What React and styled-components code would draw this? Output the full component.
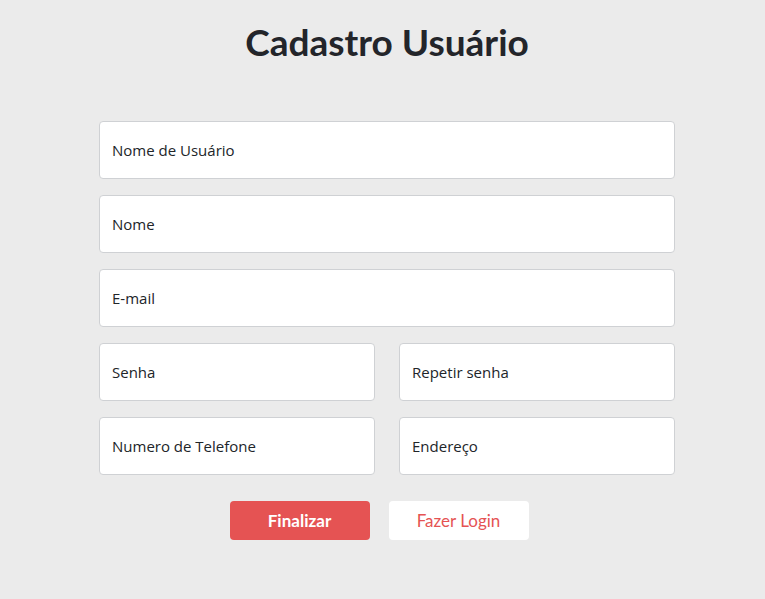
import React from "react";
import styled, { createGlobalStyle } from "styled-components";

const GlobalStyle = createGlobalStyle`
  html, body {
    margin: 0;
    padding: 0;
    background-color: #ebebeb;
    font-family: "Open Sans", "Noto Sans", sans-serif;
  }
`;

const fields = [
  [{ id: "username", placeholder: "Nome de Usuário" }],
  [{ id: "name", placeholder: "Nome" }],
  [{ id: "email", placeholder: "E-mail", type: "email" }],
  [
    { id: "password", placeholder: "Senha", type: "password" },
    { id: "repeat", placeholder: "Repetir senha", type: "password" },
  ],
  [
    { id: "phone", placeholder: "Numero de Telefone" },
    { id: "address", placeholder: "Endereço" },
  ],
];

const App = () => {
  return (
    <Container>
      <GlobalStyle />
      <Title>Cadastro Usuário</Title>
      <Form onSubmit={(e) => e.preventDefault()}>
        {fields.map((row, i) => (
          <Row key={i} $cols={row.length}>
            {row.map((f) => (
              <Input
                key={f.id}
                type={f.type || "text"}
                placeholder={f.placeholder}
              />
            ))}
          </Row>
        ))}
        <Buttons>
          <Button type="submit" $primary>
            Finalizar
          </Button>
          <Button type="button">Fazer Login</Button>
        </Buttons>
      </Form>
    </Container>
  );
};

export default App;

const Container = styled.div`
  box-sizing: border-box;
  width: 100%;
  min-height: 599px;
  padding-left: 9px;
  display: flex;
  flex-direction: column;
  align-items: center;
`;

const Title = styled.h1`
  margin: 16px 0 0;
  font-family: Lato, "Liberation Sans", sans-serif;
  font-size: 37px;
  font-weight: 700;
  line-height: 52px;
  color: #23252a;
`;

const Form = styled.form`
  width: 576px;
  margin-top: 53px;
  display: flex;
  flex-direction: column;
  gap: 16px;
`;

const Row = styled.div`
  display: grid;
  grid-template-columns: repeat(${(p) => p.$cols}, 1fr);
  column-gap: 24px;
`;

const Input = styled.input`
  box-sizing: border-box;
  height: 58px;
  width: 100%;
  padding: 0 12px;
  border: 1px solid #cfd1d4;
  border-radius: 4px;
  background: #fff;
  font-family: "Open Sans", "Noto Sans", sans-serif;
  font-size: 15px;
  color: #212529;
  outline: none;
  &::placeholder {
    color: #212529;
    opacity: 1;
  }
`;

const Buttons = styled.div`
  display: flex;
  justify-content: center;
  gap: 19px;
  margin-top: 10px;
  padding-right: 16px;
`;

const Button = styled.button`
  width: 140px;
  height: 39px;
  border: none;
  border-radius: 4px;
  cursor: pointer;
  font-family: Lato, "Liberation Sans", sans-serif;
  font-size: 17px;
  font-weight: ${(p) => (p.$primary ? 700 : 400)};
  background-color: ${(p) => (p.$primary ? "#e55353" : "#ffffff")};
  color: ${(p) => (p.$primary ? "#ffffff" : "#e55353")};
`;
